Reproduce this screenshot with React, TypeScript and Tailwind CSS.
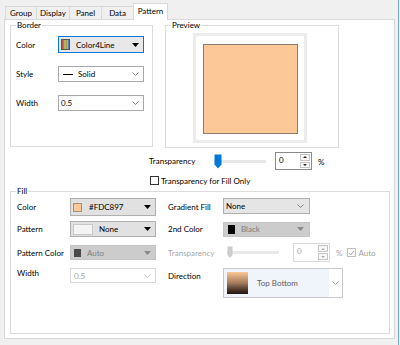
import React from "react";

const Caret = ({ color = "#000" }: { color?: string }) => (
  <svg width="7" height="4" viewBox="0 0 7 4" className="shrink-0">
    <path d="M0 0H7L3.5 4Z" fill={color} />
  </svg>
);

const Chevron = ({ color = "#777" }: { color?: string }) => (
  <svg width="7" height="4" viewBox="0 0 7 4" className="shrink-0">
    <path d="M0.5 0.5L3.5 3.5L6.5 0.5" fill="none" stroke={color} strokeWidth="0.9" />
  </svg>
);

function Spinner({ disabled, h }: { disabled?: boolean; h: string }) {
  const tri = disabled ? "#b0b0b0" : "#222";
  return (
    <div
      className={`flex w-[37px] ${h} border bg-white ${
        disabled ? "border-[#d9d9d9] text-[#a8a8a8]" : "border-[#8a8a8a] text-black"
      }`}
    >
      <div className="flex-1 pl-[3px] pt-[1px] leading-[12px]">0</div>
      <div className="flex flex-col w-[10px] my-[1px] mr-[1px] gap-[1px]">
        <div className="flex-1 flex items-center justify-center border border-[#c4c4c4] bg-[#f7f7f7]">
          <svg width="4" height="2" viewBox="0 0 4 2">
            <path d="M0 2H4L2 0Z" fill={tri} />
          </svg>
        </div>
        <div className="flex-1 flex items-center justify-center border border-[#c4c4c4] bg-[#f7f7f7]">
          <svg width="4" height="2" viewBox="0 0 4 2">
            <path d="M0 0H4L2 2Z" fill={tri} />
          </svg>
        </div>
      </div>
    </div>
  );
}

export default function App() {
  return (
    <div className="w-[400px] h-[345px] bg-[#f0f0f0] flex font-['Lato',sans-serif] text-[8px] text-black overflow-hidden">
      <div className="w-[398px] flex flex-col">
        {/* Tabs */}
        <div className="flex items-end h-[19px] pl-[5px]">
          <div className="w-[31px] h-[13px] border-l border-t border-[#d9d9d9] flex items-center justify-center leading-none">
            Group
          </div>
          <div className="w-[33px] h-[13px] border-l border-t border-[#d9d9d9] flex items-center justify-center leading-none">
            Display
          </div>
          <div className="w-[32px] h-[13px] border-l border-t border-[#d9d9d9] flex items-center justify-center leading-none">
            Panel
          </div>
          <div className="w-[32px] h-[13px] border-l border-t border-[#d9d9d9] flex items-center justify-center leading-none">
            Data
          </div>
          <div className="relative z-10 -mb-px w-[35px] h-[17px] border border-b-0 border-[#d9d9d9] bg-white flex items-start justify-center pt-[3px] leading-none">
            Pattern
          </div>
        </div>

        {/* Panel */}
        <div className="ml-[4px] w-[391px] h-[320px] border border-[#d9d9d9] bg-white flex flex-col">
          <div className="flex pl-[5px]">
            {/* Border group */}
            <fieldset className="w-[143px] h-[127px] border border-[#dcdcdc]">
              <legend className="ml-[5px] px-[1px] leading-[10px]">Border</legend>
              <div className="flex flex-col pl-[5px]">
                <div className="mt-[6px] flex items-center h-[17px]">
                  <div className="w-[42px]">Color</div>
                  <div className="flex items-center w-[86px] h-[17px] border border-[#0078d7] bg-[#e8e8e8] pl-[2px] pr-[4px]">
                    <svg width="9" height="11" viewBox="0 0 9 11" className="shrink-0">
                      <rect x="0" y="0" width="9" height="11" fill="#555" />
                      <rect x="1" y="1" width="1.5" height="9" fill="#c0504d" />
                      <rect x="2.5" y="1" width="1.5" height="9" fill="#9bbb59" />
                      <rect x="4" y="1" width="1.5" height="9" fill="#f79646" />
                      <rect x="5.5" y="1" width="1.5" height="9" fill="#d8b040" />
                      <rect x="7" y="1" width="1" height="9" fill="#4f81bd" />
                    </svg>
                    <span className="ml-[6px] flex-1">Color4Line</span>
                    <Caret />
                  </div>
                </div>
                <div className="mt-[13px] flex items-center h-[16px]">
                  <div className="w-[42px]">Style</div>
                  <div className="flex items-center w-[86px] h-[16px] border border-[#a8a8a8] bg-white pl-[4px] pr-[4px]">
                    <div className="w-[10px] h-px bg-black shrink-0" />
                    <span className="ml-[5px] flex-1">Solid</span>
                    <Chevron />
                  </div>
                </div>
                <div className="mt-[13px] flex items-center h-[16px]">
                  <div className="w-[42px]">Width</div>
                  <div className="flex items-center w-[86px] h-[16px] border border-[#a8a8a8] bg-white pl-[2px] pr-[4px]">
                    <span className="flex-1">0.5</span>
                    <Chevron />
                  </div>
                </div>
              </div>
            </fieldset>

            {/* Preview group */}
            <fieldset className="ml-[12px] w-[174px] h-[128px] border border-[#dcdcdc]">
              <legend className="ml-[5px] px-[1px] leading-[10px]">Preview</legend>
              <div className="mt-[3px] ml-[27px] w-[114px] h-[110px] border-[3px] border-[#ececec] bg-white pl-[7px] pt-[8px]">
                <div className="w-[95px] h-[90px] bg-[#fdc897] border border-[#8c7b6b]" />
              </div>
            </fieldset>
          </div>

          {/* Transparency row */}
          <div className="mt-[4px] pl-[144px] flex items-center h-[18px]">
            <div className="w-[65px]">Transparency</div>
            <svg width="52" height="15" viewBox="0 0 52 15" className="shrink-0">
              <rect x="0" y="6" width="52" height="3" fill="#e7e7e7" />
              <path d="M0.5 0.5H7.5V10.5L4 14.5L0.5 10.5Z" fill="#0078d7" />
            </svg>
            <div className="ml-[9px]">
              <Spinner h="h-[18px]" />
            </div>
            <div className="ml-[6px] pt-[2px]">%</div>
          </div>

          {/* Transparency for fill only */}
          <div className="mt-[5px] pl-[145px] flex items-center h-[11px]">
            <div className="w-[9px] h-[9px] border border-[#333] bg-white" />
            <span className="ml-[2px]">Transparency for Fill Only</span>
          </div>

          {/* Fill group */}
          <div className="pl-[5px]">
            <fieldset className="w-[380px] h-[148px] border border-[#dcdcdc]">
              <legend className="ml-[5px] px-[1px] leading-[10px]">Fill</legend>
              <div className="flex flex-col pl-[6px]">
                {/* Row 1 */}
                <div className="mt-[2px] flex items-start h-[18px]">
                  <div className="w-[53px] leading-[18px]">Color</div>
                  <div className="flex items-center w-[86px] h-[18px] border border-[#b0b0b0] bg-[#e1e1e1] pl-[2px] pr-[4px]">
                    <div className="w-[9px] h-[9px] bg-[#fdc897] border border-[#a89070] shrink-0" />
                    <span className="ml-[7px] flex-1">#FDC897</span>
                    <Caret />
                  </div>
                  <div className="ml-[12px] w-[55px] leading-[18px]">Gradient Fill</div>
                  <div className="flex items-center w-[87px] h-[16px] border border-[#b0b0b0] bg-[#e5e5e5] pl-[2px] pr-[5px]">
                    <span className="flex-1">None</span>
                    <Chevron />
                  </div>
                </div>

                {/* Row 2 */}
                <div className="mt-[5px] flex items-center h-[16px]">
                  <div className="w-[53px]">Pattern</div>
                  <div className="flex items-center w-[86px] h-[16px] border border-[#b0b0b0] bg-[#e1e1e1] pl-[2px] pr-[4px]">
                    <div className="w-[20px] h-[11px] bg-[#f4f4f4] border border-[#c8c8c8] shrink-0" />
                    <span className="ml-[6px] flex-1">None</span>
                    <Caret />
                  </div>
                  <div className="ml-[12px] w-[55px]">2nd Color</div>
                  <div className="flex items-center w-[87px] h-[15px] border border-[#c4c4c4] bg-[#cccccc] pl-[4px] pr-[5px] text-[#7d7d7d]">
                    <div className="w-[7px] h-[9px] bg-black shrink-0" />
                    <span className="ml-[6px] flex-1">Black</span>
                    <Caret color="#8a8a8a" />
                  </div>
                </div>

                {/* Row 3 */}
                <div className="mt-[6px] flex items-center h-[19px]">
                  <div className="w-[53px]">Pattern Color</div>
                  <div className="flex items-center w-[86px] h-[15px] border border-[#c4c4c4] bg-[#cccccc] pl-[3px] pr-[4px] text-[#808080]">
                    <div className="w-[7px] h-[8px] bg-[#4a4a4a] shrink-0" />
                    <span className="ml-[6px] flex-1">Auto</span>
                    <Caret color="#8a8a8a" />
                  </div>
                  <div className="ml-[12px] w-[55px] text-[#a8a8a8]">Transparency</div>
                  <svg width="52" height="13" viewBox="0 0 52 13" className="ml-[4px] shrink-0">
                    <rect x="0" y="5" width="52" height="3" fill="#e9e9e9" />
                    <path d="M0.5 0.5H5.5V9L3 12L0.5 9Z" fill="#cccccc" />
                  </svg>
                  <div className="ml-[14px]">
                    <Spinner disabled h="h-[19px]" />
                  </div>
                  <div className="ml-[6px] text-[#a8a8a8]">%</div>
                  <div className="ml-[5px] w-[9px] h-[9px] border border-[#c0c0c0] bg-white flex items-center justify-center">
                    <svg width="7" height="6" viewBox="0 0 7 6">
                      <path d="M0.8 3L2.7 4.9L6.2 0.8" fill="none" stroke="#a0a0a0" strokeWidth="1" />
                    </svg>
                  </div>
                  <span className="ml-[2px] text-[#a0a0a0]">Auto</span>
                </div>

                {/* Row 4 */}
                <div className="mt-[6px] flex items-start h-[30px]">
                  <div className="w-[53px] leading-[11px]">Width</div>
                  <div className="flex items-center w-[86px] h-[15px] border border-[#d9d9d9] bg-white pl-[3px] pr-[4px] text-[#a8a8a8]">
                    <span className="flex-1">0.5</span>
                    <Chevron color="#c8c8c8" />
                  </div>
                  <div className="ml-[12px] w-[55px] leading-[16px]">Direction</div>
                  <div className="flex w-[120px] h-[30px] border border-[#c8c8c8] bg-white">
                    <div className="flex-1 flex items-center bg-[#f0f5fb] pl-[3px]">
                      <div className="w-[21px] h-[22px] bg-gradient-to-b from-[#fdc897] via-[#a57b5c] to-[#1e1410] shrink-0" />
                      <span className="ml-[9px] text-[#606060]">Top Bottom</span>
                    </div>
                    <div className="w-[13px] flex items-center justify-center">
                      <Chevron color="#9a9a9a" />
                    </div>
                  </div>
                </div>
              </div>
            </fieldset>
          </div>
        </div>
      </div>
      <div className="w-px bg-[#7aa6d6]" />
    </div>
  );
}
